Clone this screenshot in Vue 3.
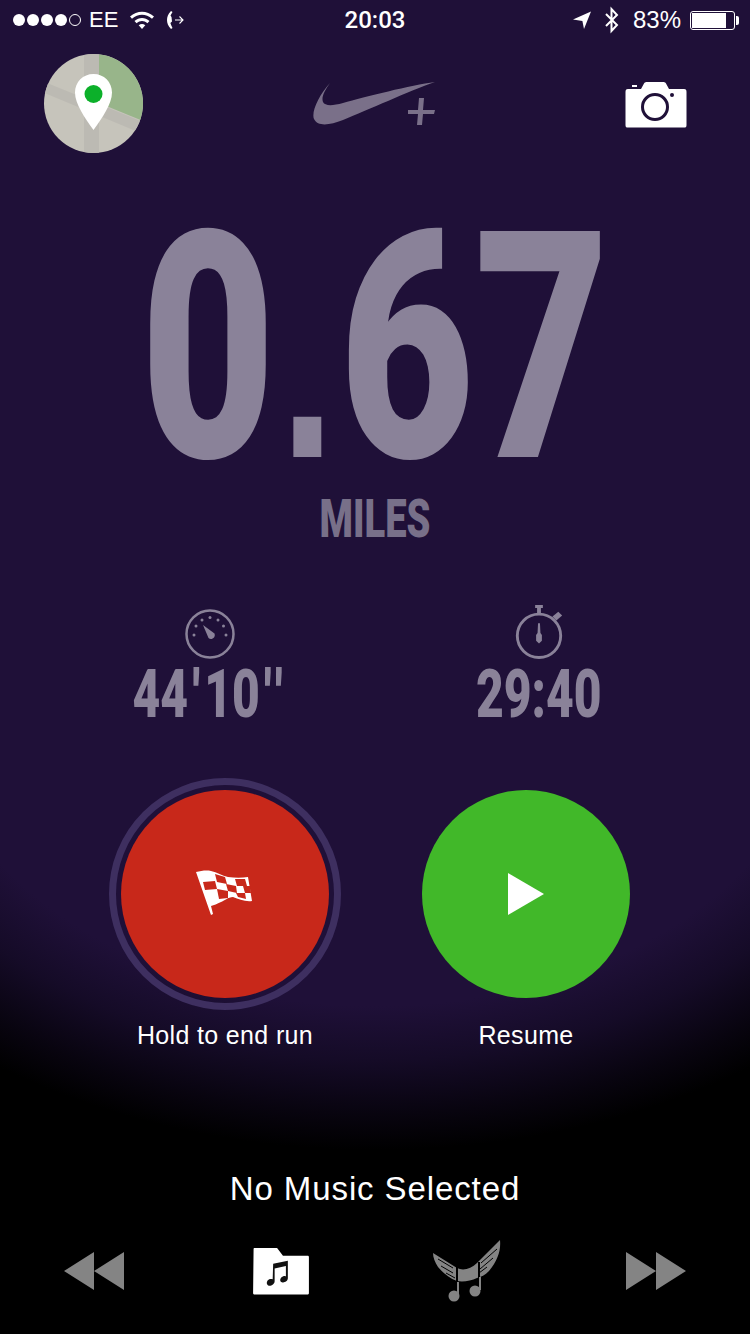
<template>
  <div class="screen">
    <div class="status-bar">
      <div class="status-left">
        <div class="signal">
          <i v-for="n in 4" :key="n" class="dot"></i>
          <i class="dot empty"></i>
        </div>
        <span class="carrier">EE</span>
        <svg class="wifi" width="26" height="20" viewBox="0 0 26 20">
          <path d="M1 6.500C8 .2 18 .2 25 6.500L23 8.700C17 3.400 9 3.400 3 8.700Z" fill="#fff" />
          <path d="M5.500 11C10 7 16 7 20.500 11L18.400 13.200C15 10.300 11 10.300 7.600 13.200Z" fill="#fff" />
          <path d="M9.700 15.300C11.800 13.600 14.200 13.600 16.300 15.300L13 19Z" fill="#fff" />
        </svg>
        <svg class="call" width="20" height="20" viewBox="0 0 20 20">
          <path d="M5 1C2 4 1 7 1 10S2 16 5 19L6.500 18C5.500 15.500 4.800 14.500 4.400 13L6 11.500 5.500 7 4.500 5.500 6.500 2Z" fill="#fff" />
          <path d="M9 10H17M13.500 6.500 17 10 13.500 13.500" fill="none" stroke="#fff" stroke-width="1.100" />
        </svg>
      </div>
      <span class="clock">20:03</span>
      <div class="status-right">
        <svg class="loc" width="18" height="18" viewBox="0 0 18 18">
          <path d="M0 8.500 18 .5 11 18 9.400 10Z" fill="#fff" />
        </svg>
        <svg width="16" height="28" viewBox="0 0 16 28">
          <path d="M2 8 13 19 7.500 25V3L13 9 2 20" fill="none" stroke="#fff" stroke-width="2" />
        </svg>
        <span class="battery-pct">83%</span>
        <div class="battery">
          <div class="battery-fill" :style="{ width: battery + '%' }"></div>
        </div>
      </div>
    </div>

    <div class="top-row">
      <svg class="map" width="99" height="99" viewBox="0 0 99 99">
        <defs>
          <clipPath id="map-clip"><circle cx="49.500" cy="49.500" r="49.500" /></clipPath>
        </defs>
        <g clip-path="url(#map-clip)">
          <rect width="99" height="99" fill="#c6c4bb" />
          <path d="M40 0H55V99H40Z" fill="#bcbab3" />
          <path d="M-4 26 99 68V80L-4 37Z" fill="#bcbab3" />
          <path d="M55 0H99V67L55 49Z" fill="#98b58a" />
        </g>
        <path d="M49.500 20C60 20 68 28 68 38.500C68 50 58 64 49.500 76C41 64 31 50 31 38.500C31 28 39 20 49.500 20Z" fill="#fff" />
        <circle cx="49.500" cy="40" r="9" fill="#0cb02a" />
      </svg>

      <svg class="swoosh" width="124" height="46" viewBox="0 0 124 46">
        <path d="M17 1C12 8 8 15 10 20C12 24 19 24 30 21C52 15 98 3 122 0C96 9 55 28 30 38C17 43 5 45 1 37C-2 30 6 13 17 1Z" fill="#7a7089" />
        <path d="M95 28H105L106 16H111L110 28H122L121 32H110L109 43H104L105 32H95Z" fill="#7a7089" />
      </svg>

      <svg class="camera" width="62" height="46" viewBox="0 0 62 46">
        <path d="M3 7H16L19 1.500C19.500 .5 20.500 0 22 0H38C39.500 0 40.500 .5 41 1.500L44 7H59C61 7 61.500 8 61.500 10V43C61.500 45 61 45.500 59 45.500H3C1 45.500 .5 45 .5 43V10C.5 8 1 7 3 7Z" fill="#fff" />
        <path d="M7 3H12V5H7Z" fill="#fff" />
        <circle cx="30" cy="25" r="12.500" fill="none" stroke="#1f1038" stroke-width="3" />
        <circle cx="47" cy="13" r="2" fill="#1f1038" />
      </svg>
    </div>

    <div class="distance">
      <div class="distance-value">0<span class="point">.</span>67</div>
      <div class="distance-unit">MILES</div>
    </div>

    <div class="stats">
      <div class="stat">
        <svg width="50" height="50" viewBox="0 0 50 50">
          <circle cx="25" cy="25" r="23.500" fill="none" stroke="#8a8299" stroke-width="2.500" />
          <g fill="#8a8299">
            <circle cx="9" cy="26" r="1.500" />
            <circle cx="11" cy="17" r="1.500" />
            <circle cx="17" cy="11" r="1.500" />
            <circle cx="25" cy="8.500" r="1.500" />
            <circle cx="33" cy="11" r="1.500" />
            <circle cx="38.500" cy="17" r="1.500" />
            <circle cx="41" cy="26" r="1.500" />
            <path d="M18 16 29.500 24.500C31 29 26 31.500 23.500 29Z" />
          </g>
        </svg>
        <div class="stat-value"><span>44<b class="tick">'</b>10<b class="tick double">''</b></span></div>
      </div>
      <div class="stat">
        <svg width="50" height="54" viewBox="0 0 50 56">
          <circle cx="25" cy="32" r="22.500" fill="none" stroke="#8a8299" stroke-width="3" />
          <path d="M21 0H29V3H27V9H23V3H21Z" fill="#8a8299" />
          <path d="M39 12 45 7 49 11 43 16Z" fill="#8a8299" />
          <path d="M24 19H26L26.500 29 28 31V37L25 40 22 37V31L23.500 29Z" fill="#8a8299" />
        </svg>
        <div class="stat-value"><span>29:40</span></div>
      </div>
    </div>

    <div class="actions">
      <div class="action">
        <div class="ring">
          <button class="round end">
            <svg width="60" height="48" viewBox="0 0 60 48">
              <path d="M1 2C6 1 11 0 16 1C22 2 27 6 33 7C40 8 47 8 53 7L57 31C50 32 44 29 38 27C33 27 29 31 26 32C22 34 19 35 16 36L18 44 16 45Z" fill="#fff" />
              <g fill="#c8281a">
                <path d="M20 4 30 7 32 14 22 12Z" />
                <path d="M40 9 50 9 52 16 42 16Z" />
                <path d="M8 12 20 11 22 19 10 20Z" />
                <path d="M31 14 41 16 42 23 33 21Z" />
                <path d="M48 16 55 16 56 23 50 23Z" />
                <path d="M22 19 33 21 33 28 24 29Z" />
                <path d="M41 23 50 23 51 29 43 27Z" />
              </g>
            </svg>
          </button>
        </div>
        <span class="action-label">Hold to end run</span>
      </div>
      <div class="action">
        <div class="ring plain">
          <button class="round resume">
            <svg width="38" height="42" viewBox="0 0 38 42"><path d="M1 0 37 21 1 42Z" fill="#fff" /></svg>
          </button>
        </div>
        <span class="action-label">Resume</span>
      </div>
    </div>

    <div class="music">
      <div class="music-title">No Music Selected</div>
      <div class="controls">
        <svg width="62" height="38" viewBox="0 0 62 38">
          <path d="M31 0V38L1 19ZM61 0V38L31 19Z" fill="#848484" />
        </svg>
        <svg class="folder" width="58" height="47" viewBox="0 0 58 48">
          <path d="M1 1C1 .5 1.500 0 2 0H25L31 8H56C57 8 57.500 8.500 57.500 9.500V46C57.500 47 57 47.500 56 47.500H2C1 47.500 .5 47 .5 46Z" fill="#fff" />
          <path d="M21 16 36 13V31C36 34 32 36 30 35C27 34 28 30 31 29C32 28.500 33 28.500 34 29V18.500L22.500 21V34C22.500 37 19 39 16.500 38.500C13.500 37.500 14 33.500 17 32C18 31.500 19.500 31.500 20.500 32Z" fill="#111" />
        </svg>
        <svg width="68" height="62" viewBox="0 0 68 62">
          <path d="M0 13 24 28C30 31 38 29 44 23L67 0C68 10 65 20 56 31C52 35 48 37 44 38C38 41 30 42 24 41C16 38 10 33 5 27C2 22 0 18 0 13Z" fill="#848484" />
          <path d="M5 19 20 28M8 26 20 33M13 33 22 38M64 9 48 23M60 18 47 29M54 27 46 33" stroke="#000" stroke-width="1" />
          <path d="M24 27V42M46 22V39" stroke="#000" stroke-width="2" />
          <path d="M25 42V55M47 37V50" stroke="#848484" stroke-width="2" />
          <circle cx="21" cy="56" r="5.500" fill="#848484" />
          <circle cx="42" cy="51" r="5.500" fill="#848484" />
        </svg>
        <svg width="62" height="38" viewBox="0 0 62 38">
          <path d="M1 0V38L31 19ZM31 0V38L61 19Z" fill="#848484" />
        </svg>
      </div>
    </div>
  </div>
</template>

<script setup>
const battery = 83
</script>

<style>
html, body {
  margin: 0;
  background: #000;
}
</style>

<style scoped>
.screen {
  width: 750px;
  height: 1334px;
  overflow: hidden;
  display: flex;
  flex-direction: column;
  font-family: "Liberation Sans", Arial, sans-serif;
  color: #fff;
  background:
    linear-gradient(#1f1038 0, #1f1038 700px, transparent 700px),
    radial-gradient(ellipse 650px 450px at 375px 700px, #1f1038 68%, #150b27 80%, #08040f 92%, #000 100%);
}

.status-bar {
  height: 40px;
  padding: 0 10px;
  display: grid;
  grid-template-columns: 1fr auto 1fr;
  align-items: center;
  font-size: 22px;
}

.status-left,
.status-right {
  display: flex;
  align-items: center;
}

.status-right {
  justify-content: flex-end;
}

.signal {
  display: flex;
  gap: 2px;
  margin-left: 3px;
}

.dot {
  width: 12px;
  height: 12px;
  border-radius: 50%;
  background: #fff;
  box-sizing: border-box;
}

.dot.empty {
  background: none;
  border: 1px solid #fff;
}

.carrier {
  margin-left: 8px;
}

.wifi {
  margin-left: 11px;
}

.call {
  margin-left: 11px;
}

.clock {
  font-family: Roboto, sans-serif;
  font-weight: 500;
  font-size: 24px;
}

.loc {
  margin-right: 13px;
}

.battery-pct {
  margin-left: 13px;
  font-size: 24px;
}

.battery {
  width: 45px;
  height: 19px;
  margin-left: 9px;
  margin-right: 5px;
  padding: 1px;
  box-sizing: border-box;
  border: 1px solid #fff;
  border-radius: 3px;
  position: relative;
}

.battery::after {
  content: "";
  position: absolute;
  right: -5px;
  top: 4px;
  width: 3px;
  height: 9px;
  background: #fff;
  border-radius: 0 2px 2px 0;
}

.battery-fill {
  height: 100%;
  background: #fff;
}

.top-row {
  height: 113px;
  padding: 14px 63px 0 44px;
  box-sizing: border-box;
  display: flex;
  justify-content: space-between;
  align-items: flex-start;
}

.swoosh {
  margin-top: 28px;
  margin-right: 18px;
}

.camera {
  margin-top: 28px;
}

.distance {
  display: flex;
  flex-direction: column;
  align-items: center;
}

.distance-value {
  font-family: Roboto, "Liberation Sans", sans-serif;
  font-size: 318px;
  line-height: 286px;
  height: 286px;
  font-weight: 900;
  color: #8a8299;
  transform: scaleX(0.733);
  margin-top: 53px;
  white-space: nowrap;
}

.point {
  font-family: "Liberation Sans", sans-serif;
  font-weight: 700;
  font-size: 270px;
  margin: 0 6px;
}

.distance-unit {
  font-family: Roboto, "Liberation Sans", sans-serif;
  font-size: 53px;
  font-weight: 900;
  line-height: 54px;
  color: #787089;
  transform: scaleX(0.72);
}

.stats {
  display: flex;
  margin-top: 59px;
}

.stat {
  display: flex;
  flex-direction: column;
  align-items: center;
  justify-content: flex-end;
  height: 120px;
}

.stat:first-child {
  flex: 0 0 420px;
}

.stat:last-child {
  flex: 0 0 238px;
}

.stat-value {
  font-family: Roboto, "Liberation Sans", sans-serif;
  font-size: 67px;
  font-weight: 900;
  line-height: 62px;
  color: #8a8299;
  margin-top: 4px;
}

.stat-value span {
  display: inline-block;
  transform: scaleX(0.716);
  white-space: nowrap;
}

.tick {
  font-weight: 900;
  margin: 0 6px;
}

.tick.double {
  margin-right: 0;
  letter-spacing: 6px;
}

.actions {
  display: flex;
  gap: 69px;
  margin-top: 53px;
  padding-left: 109px;
}

.action {
  display: flex;
  flex-direction: column;
  align-items: center;
}

.ring {
  width: 232px;
  height: 232px;
  box-sizing: border-box;
  border-radius: 50%;
  border: 7px solid #3e2f60;
  padding: 5px;
}

.ring.plain {
  border-color: transparent;
}

.round {
  width: 100%;
  height: 100%;
  border: 0;
  padding: 0;
  border-radius: 50%;
  display: flex;
  align-items: center;
  justify-content: center;
}

.round.end {
  background: #c8281a;
}

.round.resume {
  background: #41b829;
}

.action-label {
  font-size: 25px;
  line-height: 30px;
  margin-top: 10px;
  letter-spacing: 0.35px;
}

.music {
  margin-top: auto;
  padding-bottom: 32px;
}

.music-title {
  text-align: center;
  font-size: 33px;
  line-height: 40px;
  letter-spacing: 0.9px;
}

.controls {
  display: flex;
  justify-content: space-between;
  align-items: center;
  padding: 0 63px;
  height: 62px;
  margin-top: 31px;
}

.folder {
  margin-left: 3px;
}
</style>
